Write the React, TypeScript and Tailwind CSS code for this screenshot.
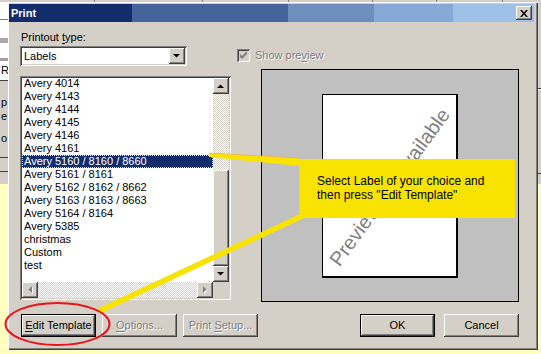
import React from "react";

const raised =
  "shadow-[inset_-1px_-1px_#404040,inset_1px_1px_#ffffff,inset_-2px_-2px_#808080,inset_2px_2px_#d4d0c8]";
const sunken =
  "shadow-[inset_1px_1px_#808080,inset_-1px_-1px_#ffffff,inset_2px_2px_#404040,inset_-2px_-2px_#d4d0c8]";
const checker =
  "bg-[repeating-conic-gradient(#d4d0c8_0_25%,#ffffff_0_50%)] bg-[length:2px_2px]";
const disabledText = "text-[#808080] [text-shadow:1px_1px_0_#ffffff]";

const items = [
  "Avery 4014",
  "Avery 4143",
  "Avery 4144",
  "Avery 4145",
  "Avery 4146",
  "Avery 4161",
  "Avery 5160 / 8160 / 8660",
  "Avery 5161 / 8161",
  "Avery 5162 / 8162 / 8662",
  "Avery 5163 / 8163 / 8663",
  "Avery 5164 / 8164",
  "Avery 5385",
  "christmas",
  "Custom",
  "test",
];

function Arrow({ dir, disabled }: { dir: "up" | "down" | "left" | "right"; disabled?: boolean }) {
  const pts = {
    up: "0,4 7,4 3.5,0.5",
    down: "0,0 7,0 3.5,3.5",
    left: "4,0 4,7 0.5,3.5",
    right: "0,0 0,7 3.5,3.5",
  }[dir];
  const vertical = dir === "up" || dir === "down";
  const w = vertical ? 7 : 4;
  const h = vertical ? 4 : 7;
  return (
    <svg width={w + 1} height={h + 1} viewBox={`0 0 ${w + 1} ${h + 1}`}>
      {disabled && <polygon points={pts} fill="#ffffff" transform="translate(1,1)" />}
      <polygon points={pts} fill={disabled ? "#808080" : "#000000"} />
    </svg>
  );
}

function ScrollBtn({ dir, disabled }: { dir: "up" | "down" | "left" | "right"; disabled?: boolean }) {
  return (
    <div className={`w-[16px] h-[16px] shrink-0 bg-[#d4d0c8] ${raised} flex items-center justify-center`}>
      <Arrow dir={dir} disabled={disabled} />
    </div>
  );
}

function Btn({ children, disabled, def }: { children: React.ReactNode; disabled?: boolean; def?: boolean }) {
  return (
    <div className={`w-[75px] h-[23px] ${def ? "border border-black" : ""}`}>
      <div
        className={`w-full h-full bg-[#d4d0c8] ${raised} flex items-center justify-center ${
          disabled ? disabledText : "text-black"
        }`}
      >
        {children}
      </div>
    </div>
  );
}

function Backdrop() {
  return (
    <>
      {/* window behind, left side */}
      <div className="absolute left-0 top-0 w-[8px] h-full flex flex-col bg-[#ffffc0]">
        <div className="h-[19px] bg-white border-t-2 border-[#d4d0c8]" />
        <div className="h-px bg-[#808080]" />
        <div className="h-[18px] bg-white" />
        <div className="h-[6px] bg-[#a8a8a8] border-b border-white" />
        <div className="h-[14px] bg-white" />
        <div className="h-[3px] bg-[#a0a0a0]" />
        <div className="h-[19px] bg-white overflow-hidden leading-[19px] pl-px">R</div>
        <div className="h-px bg-[#404040]" />
        <div className="h-[76px] bg-[#d4d0c8] overflow-hidden pl-[1px] pt-[14px] leading-[14px] flex flex-col">
          <span>p</span>
          <span>e</span>
          <span className="mt-[8px]">o</span>
        </div>
        <div className="h-px bg-[#404040]" />
        <div className="h-[14px] bg-[#d4d0c8] border-b border-[#404040]" />
        <div className="h-[12px] bg-[#d4d0c8]" />
      </div>
      {/* window behind, right side */}
      <div className="absolute right-0 top-0 w-[4px] h-full flex flex-col bg-[#ffffc0]">
        <div className="h-[88px] bg-[#d4d0c8]" />
        <div className="h-px bg-[#404040]" />
        <div className="h-px bg-white" />
        <div className="h-[83px] bg-[#d4d0c8]" />
        <div className="h-px bg-[#404040]" />
        <div className="h-[10px] bg-[#d4d0c8]" />
      </div>
      {/* toolbar strip above */}
      <div className="absolute left-[8px] top-0 w-[530px] h-[2px] bg-[#d4d0c8] flex">
        <div className="w-[87px] border-r border-[#808080]" />
        <div className="w-[108px] border-r border-[#808080]" />
        <div className="w-[86px] border-r border-[#808080]" />
        <div className="w-[84px] border-r border-[#808080]" />
        <div className="w-[64px] border-r border-[#808080]" />
        <div className="w-[66px] border-r border-[#808080]" />
      </div>
      <div className="absolute left-0 bottom-0 w-full h-[4px] bg-[#ffffc0]" />
    </>
  );
}

function TitleBar() {
  return (
    <div className="relative ml-px mr-[4px] mt-[2px] h-[18px] flex text-white">
      <div className="w-[123px] bg-[#132c6c]" />
      <div className="w-[156px] bg-[#46649c]" />
      <div className="w-[86px] bg-[#6e8ebe]" />
      <div className="w-[79px] bg-[#87a9d8]" />
      <div className="flex-1 bg-[#9fc1e8] flex items-center justify-end pr-[2px]">
        <div className={`w-[16px] h-[14px] bg-[#d4d0c8] ${raised} flex items-center justify-center`}>
          <svg width="8" height="7" viewBox="0 0 8 7">
            <path d="M0 0h2l2 2.5L6 0h2L5 3.5 8 7H6L4 4.5 2 7H0l3-3.5z" fill="#000" />
          </svg>
        </div>
      </div>
      <span className="absolute left-[2px] top-0 leading-[18px] font-bold text-[11px]">Print</span>
    </div>
  );
}

function ListBox() {
  return (
    <div className={`mt-[10px] w-[211px] h-[224px] bg-white ${sunken} p-[2px] flex flex-col`}>
      <div className="flex h-[204px]">
        <div className="flex-1 overflow-hidden">
          <div className="-mt-px">
            {items.map((it, i) =>
              i === 6 ? (
                <div
                  key={it}
                  className="h-[13px] leading-[13px] pl-[2px] bg-[#132c6c] text-white outline-1 outline-dotted outline-[#e8e4b0] -outline-offset-1 whitespace-nowrap"
                >
                  {it}
                </div>
              ) : (
                <div key={it} className="h-[13px] leading-[13px] pl-[2px] whitespace-nowrap">
                  {it}
                </div>
              )
            )}
          </div>
        </div>
        <div className="w-[16px] flex flex-col">
          <ScrollBtn dir="up" />
          <div className={`h-[76px] ${checker}`} />
          <div className={`flex-1 bg-[#d4d0c8] ${raised}`} />
          <ScrollBtn dir="down" />
        </div>
      </div>
      <div className="flex h-[16px]">
        <ScrollBtn dir="left" disabled />
        <div className={`flex-1 ${checker}`} />
        <ScrollBtn dir="right" disabled />
        <div className="w-[16px] bg-[#d4d0c8]" />
      </div>
    </div>
  );
}

function Dialog() {
  return (
    <div
      className={`absolute left-[8px] top-[2px] w-[530px] h-[348px] bg-[#d4d0c8] shadow-[inset_1px_1px_#ffffff,inset_-1px_-1px_#404040,inset_-2px_-2px_#808080] flex flex-col`}
    >
      <TitleBar />
      <div className="flex pl-[12px] pt-[9px]">
        <div className="w-[211px] flex flex-col">
          <div className="h-[13px] leading-[13px] pl-px">
            Printout <span className="underline underline-offset-2">t</span>ype:
          </div>
          <div className={`mt-[2px] w-[167px] h-[20px] bg-white ${sunken} flex items-center pl-[4px] pr-[2px]`}>
            <span className="flex-1 leading-[16px]">Labels</span>
            <ScrollBtn dir="down" />
          </div>
          <ListBox />
        </div>
        <div className="ml-[6px] flex flex-col">
          <div className="mt-[18px] h-[13px] flex items-center">
            <div className={`w-[13px] h-[13px] bg-[#d4d0c8] ${sunken} flex items-center justify-center`}>
              <svg width="7" height="7" viewBox="0 0 7 7">
                <path d="M0 2v3l2 2 5-5V-1L2 4z" fill="#808080" />
              </svg>
            </div>
            <span className={`ml-[5px] leading-[13px] ${disabledText}`}>
              Show pre<span className="underline underline-offset-2">v</span>iew
            </span>
          </div>
          <div className="mt-[7px] ml-[24px] w-[258px] h-[233px] border border-black bg-[#c0c0c0] flex items-center justify-center">
            <div className="w-[136px] h-[184px] bg-white border border-black border-r-2 border-b-2 overflow-hidden flex items-center justify-center">
              <span className="rotate-[-54deg] whitespace-nowrap text-[20px] text-[#808080] translate-y-[2px]">
                Preview not available
              </span>
            </div>
          </div>
        </div>
      </div>
      <div className="mt-[12px] flex pl-[13px] pr-[19px]">
        <Btn def>
          <span>
            <span className="underline underline-offset-2">E</span>dit Template
          </span>
        </Btn>
        <div className="ml-[6px]">
          <Btn disabled>
            <span>
              <span className="underline underline-offset-2">O</span>ptions...
            </span>
          </Btn>
        </div>
        <div className="ml-[6px]">
          <Btn disabled>
            <span>
              Print <span className="underline underline-offset-2">S</span>etup...
            </span>
          </Btn>
        </div>
        <div className="ml-auto">
          <Btn def>OK</Btn>
        </div>
        <div className="ml-[9px]">
          <Btn>Cancel</Btn>
        </div>
      </div>
    </div>
  );
}

function Annotations() {
  return (
    <>
      <svg className="absolute left-0 top-0 pointer-events-none" width="541" height="354" viewBox="0 0 541 354">
        <polygon points="209,153 299,158 299,166 209,157" fill="#f8e300" />
        <line x1="209" y1="153" x2="299" y2="158" stroke="#f0b060" strokeWidth="0.8" />
        <line x1="302" y1="216" x2="99" y2="311" stroke="#f8e300" strokeWidth="5.5" />
        <ellipse cx="57.5" cy="324" rx="52" ry="21" fill="none" stroke="#e8161b" strokeWidth="2" />
      </svg>
      <div className="absolute left-[299px] top-[159px] w-[216px] h-[59px] bg-[#f8e300] pl-[18px] pt-[15px] text-[12px] leading-[14px] text-black">
        Select Label of your choice and
        <br />
        then press "Edit Template"
      </div>
    </>
  );
}

export default function App() {
  return (
    <div className="relative w-[541px] h-[354px] overflow-hidden bg-[#d4d0c8] font-['Liberation_Sans',Arial,sans-serif] text-[11px] text-black">
      <Backdrop />
      <Dialog />
      <Annotations />
    </div>
  );
}
